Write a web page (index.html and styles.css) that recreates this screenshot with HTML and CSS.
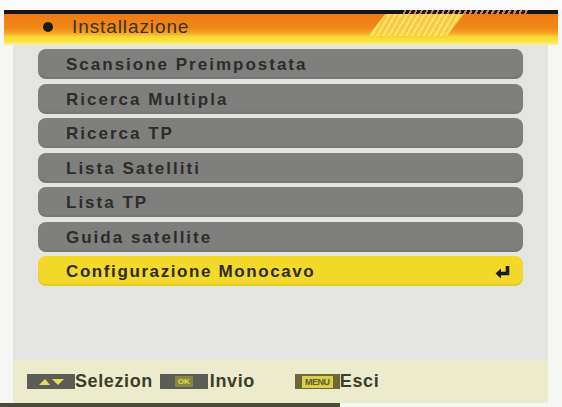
FILE: index.html
```html
<!DOCTYPE html>
<html lang="it">
<head>
<meta charset="utf-8">
<link rel="stylesheet" href="styles.css">
</head>
<body>
<div class="screen">
  <div class="topgap"></div>
  <div class="header">
    <div class="hatch-dark"></div>
    <div class="hatch-light"></div>
    <span class="dot"></span>
    <span class="title">Installazione</span>
  </div>
  <div class="panel">
    <ul class="menu">
      <li class="item">Scansione Preimpostata</li>
      <li class="item">Ricerca Multipla</li>
      <li class="item">Ricerca TP</li>
      <li class="item">Lista Satelliti</li>
      <li class="item">Lista TP</li>
      <li class="item">Guida satellite</li>
      <li class="item active">Configurazione Monocavo
        <svg class="enter" width="16" height="15" viewBox="0 0 16 15"><path d="M12.5 1 V8.5 H5" fill="none" stroke="#1a1a10" stroke-width="3.6"/><path d="M0.5 8.5 L6 3.5 V13.5 Z" fill="#1a1a10"/></svg>
      </li>
    </ul>
    <div class="footer">
      <span class="key"><svg width="30" height="9" viewBox="0 0 30 9"><path d="M3 8 L9 2 L14 8 Z" fill="#e6df55"/><path d="M16 2 H28 L22 8 Z" fill="#e6df55"/></svg></span>
      <span class="label sel">Selezion</span>
      <span class="key"><span class="ok">OK</span></span>
      <span class="label inv">Invio</span>
      <span class="key menu-key"><span class="mk">MENU</span></span>
      <span class="label">Esci</span>
    </div>
  </div>
  <div class="bottomline"></div>
</div>
</body>
</html>
```
FILE: styles.css
```css
html, body {
  margin: 0;
  padding: 0;
}
body {
  width: 562px;
  height: 407px;
  overflow: hidden;
  background: #f6f6f4;
  font-family: "Liberation Sans", Arial, sans-serif;
}
.screen {
  display: flex;
  flex-direction: column;
  height: 407px;
}
.topgap {
  height: 10px;
  background: #fbfbfb;
}
.header {
  position: relative;
  height: 31px;
  margin: 0 4px;
  border-top: 4px solid #141414;
  background: linear-gradient(to bottom, #ee7a14 0%, #f08818 45%, #f4a826 62%, #f8d834 74%, #f9e43c 88%, #f4f0b0 100%);
  display: flex;
  align-items: center;
}
.hatch-dark {
  position: absolute;
  left: 397px;
  top: -4px;
  width: 128px;
  height: 4px;
  background: repeating-linear-gradient(115deg, #141414 0 3px, #d9823a 3px 5px);
}
.hatch-light {
  position: absolute;
  left: 364px;
  top: 0;
  width: 96px;
  height: 22px;
  clip-path: polygon(18% 0, 100% 0, 82% 100%, 0 100%);
  background: repeating-linear-gradient(120deg, #f9d53a 0 3px, #fbe88a 3px 5px);
  opacity: 0.9;
}
.dot {
  width: 10px;
  height: 10px;
  border-radius: 50%;
  background: #1c1a14;
  margin-left: 39px;
  margin-top: -6px;
}
.title {
  margin-left: 19px;
  margin-top: -6px;
  font-size: 19px;
  color: #3a3426;
  letter-spacing: 0.9px;
}
.panel {
  flex: 1;
  margin-left: 13px;
  width: 535px;
  background: #e4e4e2;
  display: flex;
  flex-direction: column;
}
.menu {
  list-style: none;
  margin: 4px 0 0 25px;
  padding: 0;
  width: 485px;
  display: flex;
  flex-direction: column;
  gap: 4.5px;
}
.item {
  height: 30px;
  border-radius: 8px;
  background: #7f7f7d;
  color: #2c2c2a;
  font-size: 17px;
  font-weight: bold;
  letter-spacing: 2px;
  padding-left: 28px;
  padding-top: 2px;
  box-sizing: border-box;
  display: flex;
  align-items: center;
  box-shadow: inset 0 -2px 2px rgba(0,0,0,0.08);
}
.item.active {
  background: #f3d92a;
  color: #2e2a14;
  justify-content: space-between;
  padding-right: 12px;
  letter-spacing: 1.6px;
}
.enter {
  display: block;
}
.footer {
  margin-top: auto;
  height: 43px;
  background: #ecebcc;
  display: flex;
  align-items: center;
  padding-left: 14px;
}
.key {
  width: 48px;
  height: 15px;
  background: #5d5d58;
  display: flex;
  align-items: center;
  justify-content: center;
}
.ok {
  font-size: 8px;
  font-weight: bold;
  color: #e6df55;
  background: #8a8640;
  padding: 0 3px;
  line-height: 11px;
}
.menu-key {
  width: 45px;
  background: #6a6838;
}
.mk {
  font-size: 9px;
  font-weight: bold;
  color: #5a5a30;
  background: #d9cf4a;
  padding: 0 3px;
  line-height: 12px;
  letter-spacing: -0.5px;
}
.label {
  font-size: 18px;
  font-weight: bold;
  color: #3a3e2c;
  letter-spacing: 0.6px;
}
.label.sel {
  margin-right: 7px;
}
.label.inv {
  margin-left: 2px;
  margin-right: 40px;
}
.bottomline {
  height: 4px;
  width: 340px;
  background: #4a4a3a;
}
```
